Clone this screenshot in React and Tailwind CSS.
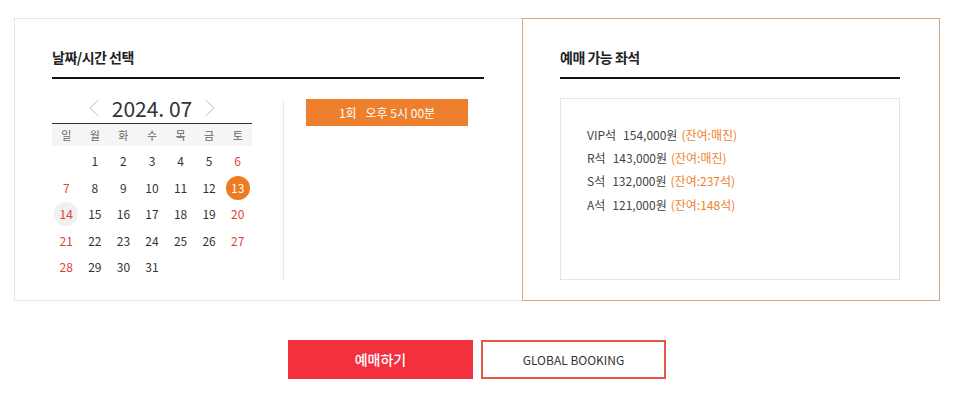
import React from "react";
import { ChevronLeft, ChevronRight } from "lucide-react";

const font = { fontFamily: '"Noto Sans CJK KR", "Noto Sans", sans-serif' };

const weekdays = ["일", "월", "화", "수", "목", "금", "토"];

const weeks = [
  [null, 1, 2, 3, 4, 5, 6],
  [7, 8, 9, 10, 11, 12, 13],
  [14, 15, 16, 17, 18, 19, 20],
  [21, 22, 23, 24, 25, 26, 27],
  [28, 29, 30, 31, null, null, null],
];

const seats = [
  { name: "VIP석", price: "154,000원", left: "(잔여:매진)" },
  { name: "R석", price: "143,000원", left: "(잔여:매진)" },
  { name: "S석", price: "132,000원", left: "(잔여:237석)" },
  { name: "A석", price: "121,000원", left: "(잔여:148석)" },
];

function DayCell({ day, col }) {
  if (!day) return <div className="h-[26.5px]" />;
  const red = col === 0 || col === 6;
  let inner = "text-[#333]";
  if (day === 13) inner = "bg-[#ec7b22] text-white";
  else if (day === 14) inner = "bg-[#f0f0f0] text-[#d8453a]";
  else if (red) inner = "text-[#d8453a]";
  return (
    <div className="h-[26.5px] flex items-center justify-center">
      <span
        className={`w-[24px] h-[24px] rounded-full flex items-center justify-center text-[12px] ${inner}`}
      >
        {day}
      </span>
    </div>
  );
}

export default function App() {
  return (
    <div className="w-[964px] h-[403px] bg-white pt-[18px] pl-[14px]" style={font}>
      {/* Panels */}
      <div className="flex w-[926px] h-[283px]">
        {/* Date / time */}
        <div className="w-[508px] border-l border-t border-b border-[#e5e5e5] pl-[37px] pr-[38px] pt-[28px]">
          <h2 className="text-[14px] leading-[20px] font-bold text-[#222] tracking-[-0.5px] pb-[10px] border-b-2 border-[#111]">
            날짜/시간 선택
          </h2>
          <div className="flex mt-[14px]">
            <div className="w-[200px]">
              <div className="h-[30px] flex items-center justify-center gap-[3px]">
                <ChevronLeft size={30} strokeWidth={0.8} className="text-[#bbb]" />
                <span className="text-[21px] leading-[30px] text-[#333]">2024. 07</span>
                <ChevronRight size={30} strokeWidth={0.8} className="text-[#bbb]" />
              </div>
              <div className="grid grid-cols-7 h-[23px] bg-[#f5f5f5] border-t border-[#333] items-center">
                {weekdays.map((w) => (
                  <span key={w} className="text-center text-[11px] text-[#666]">
                    {w}
                  </span>
                ))}
              </div>
              <div className="pt-[2px]">
                {weeks.map((week, i) => (
                  <div key={i} className="grid grid-cols-7">
                    {week.map((d, j) => (
                      <DayCell key={j} day={d} col={j} />
                    ))}
                  </div>
                ))}
              </div>
            </div>
            <div className="w-px h-[180px] mt-[7px] ml-[31px] bg-[#e8e8e8]" />
            <div className="ml-[22px] mt-[6px]">
              <div className="w-[162px] h-[27px] bg-[#ee7f2d] text-white text-[12px] flex items-center justify-center gap-[9px]">
                <span>1회</span>
                <span>오후 5시 00분</span>
              </div>
            </div>
          </div>
        </div>

        {/* Seats */}
        <div className="w-[418px] border border-[#dfa677] pl-[37px] pr-[39px] pt-[28px]">
          <h2 className="text-[14px] leading-[20px] font-bold text-[#222] tracking-[-0.5px] pb-[10px] border-b-2 border-[#111]">
            예매 가능 좌석
          </h2>
          <div className="mt-[19px] h-[182px] border border-[#e5e5e5] pl-[26px] pt-[24px]">
            {seats.map((s) => (
              <div key={s.name} className="h-[23.3px] flex items-center text-[12px]">
                <span className="text-[#444]">{s.name}</span>
                <span className="text-[#444] ml-[7px]">{s.price}</span>
                <span className="text-[#ee7f2d] ml-[4px]">{s.left}</span>
              </div>
            ))}
          </div>
        </div>
      </div>

      {/* Buttons */}
      <div className="flex justify-center gap-[8px] mt-[39px] w-[926px]">
        <button className="w-[185px] h-[39px] bg-[#f4303f] text-white text-[14px] font-medium">
          예매하기
        </button>
        <button className="w-[185px] h-[39px] border-2 border-[#e65548] text-[#333] text-[12px]">
          GLOBAL BOOKING
        </button>
      </div>
    </div>
  );
}
